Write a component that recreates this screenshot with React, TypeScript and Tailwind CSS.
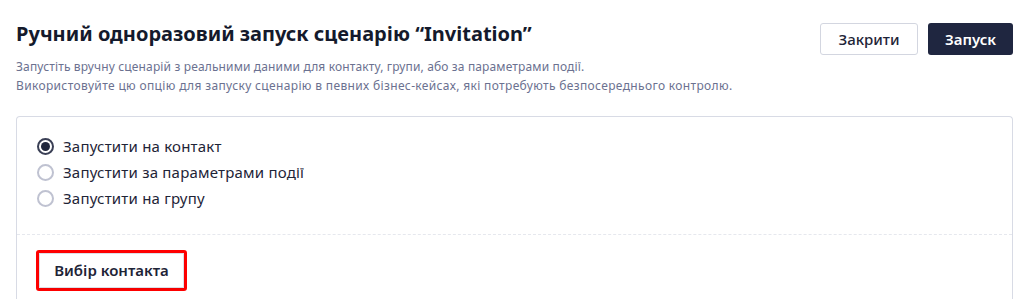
import React from "react";

function Radio({ checked, label }: { checked?: boolean; label: string }) {
  return (
    <label className="flex items-center gap-[9px] h-[26px] text-[15px] tracking-[0.2px] text-[#1e2437]">
      {checked ? (
        <span className="w-[17px] h-[17px] rounded-full border-[2px] border-[#3a3f55] flex items-center justify-center bg-white">
          <span className="w-[9px] h-[9px] rounded-full bg-[#20263c]" />
        </span>
      ) : (
        <span className="w-[17px] h-[17px] rounded-full border-[2px] border-[#bfc2d1] bg-white" />
      )}
      <span>{label}</span>
    </label>
  );
}

export default function App() {
  return (
    <div
      className="w-[1026px] h-[299px] overflow-hidden bg-white"
      style={{ fontFamily: "'Noto Sans', sans-serif" }}
    >
      <div className="flex justify-between pl-4 pr-[13px] pt-[23px]">
        <div>
          <h1 className="text-[20px] font-bold leading-[26px] text-[#141a2c] -mt-[2px]">
            Ручний одноразовий запуск сценарію “Invitation”
          </h1>
          <p className="mt-[10px] text-[12px] leading-[19px] text-[#6b7190]">
            <span className="tracking-[0.14px]">
              Запустіть вручну сценарій з реальними даними для контакту, групи, або за параметрами події.
            </span>
            <br />
            <span className="tracking-[0.35px]">
              Використовуйте цю опцію для запуску сценарію в певних бізнес-кейсах, які потребують безпосереднього контролю.
            </span>
          </p>
        </div>
        <div className="flex gap-[10px]">
          <button className="h-[32px] w-[98px] rounded-[3px] border border-[#d3d6e0] bg-white text-[15px] font-medium text-[#1e2437]">
            Закрити
          </button>
          <button className="h-[32px] w-[85px] rounded-[3px] bg-[#1f2640] text-[15px] font-semibold text-white">
            Запуск
          </button>
        </div>
      </div>
      <div className="mx-4 mr-[13px] mt-[21px] rounded-t-[4px] border border-b-0 border-[#d8dbe5] h-[200px]">
        <div className="pl-[20px] pt-[16px] pb-[23px] flex flex-col">
          <Radio checked label="Запустити на контакт" />
          <Radio label="Запустити за параметрами події" />
          <Radio label="Запустити на групу" />
        </div>
        <div className="border-t border-dashed border-[#e6e8ee] mx-0" />
        <div className="pl-[19px] pt-[15px]">
          <div className="inline-flex rounded-[3px] border-[3px] border-[#ff0000]">
            <button className="h-[35px] w-[145px] bg-white border border-[#dcdfe7] shadow-[0_1px_2px_rgba(0,0,0,0.08)] text-[15px] font-semibold text-[#1e2437]">
              Вибір контакта
            </button>
          </div>
        </div>
      </div>
    </div>
  );
}
